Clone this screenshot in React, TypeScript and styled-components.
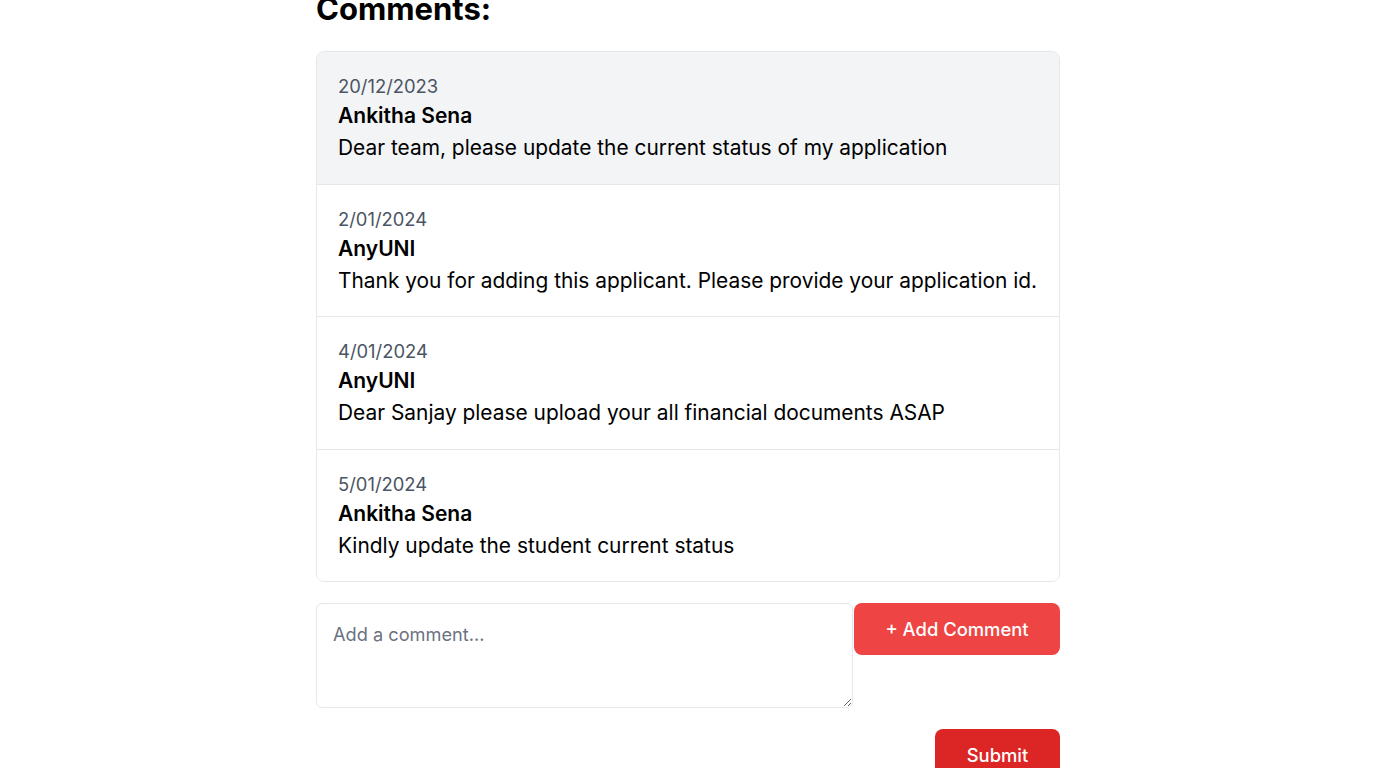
import React, { useState, ChangeEvent } from 'react';
import styled, { createGlobalStyle } from 'styled-components';

type Comment = {
  date: string;
  author: string;
  text: string;
};

const comments: Comment[] = [
  { date: '20/12/2023', author: 'Ankitha Sena', text: 'Dear team, please update the current status of my application' },
  { date: '2/01/2024', author: 'AnyUNI', text: 'Thank you for adding this applicant. Please provide your application id.' },
  { date: '4/01/2024', author: 'AnyUNI', text: 'Dear Sanjay please upload your all financial documents ASAP' },
  { date: '5/01/2024', author: 'Ankitha Sena', text: 'Kindly update the student current status' },
];

const CommentsSection = () => {
  const [draft, setDraft] = useState('');

  const draftHandler = (event: ChangeEvent<HTMLTextAreaElement>) => {
    setDraft(event.currentTarget.value);
  };

  return (
    <StyledPage>
      <GlobalStyle />
      <StyledContainer>
        <Heading>Comments:</Heading>

        <CommentList>
          {comments.map((c, i) => (
            <CommentItem key={i} $active={i === 0}>
              <CommentDate>{c.date}</CommentDate>
              <CommentAuthor>{c.author}</CommentAuthor>
              <CommentText>{c.text}</CommentText>
            </CommentItem>
          ))}
        </CommentList>

        <InputRow>
          <CommentInput placeholder="Add a comment..." value={draft} onChange={(e) => draftHandler(e)} />
          <AddButton>+ Add Comment</AddButton>
        </InputRow>

        <SubmitRow>
          <SubmitButton>Submit</SubmitButton>
        </SubmitRow>
      </StyledContainer>
    </StyledPage>
  );
};

export default CommentsSection;

const GlobalStyle = createGlobalStyle`
  html, body {
    margin: 0;
    padding: 0;
    background: #ffffff;
    overflow: hidden;
  }

  body {
    font-family: Inter, "Noto Sans", sans-serif;
    color: #111111;
  }

  * {
    box-sizing: border-box;
  }
`;

const StyledPage = styled.div`
  height: 768px;
  overflow: hidden;
`;

const StyledContainer = styled.div`
  width: 768px;
  margin: -9px auto 0;
  padding: 0 12px;
`;

const Heading = styled.h2`
  margin: 0 0 24px;
  font-size: 31px;
  line-height: 36px;
  font-weight: 700;
  color: #000000;
`;

const CommentList = styled.div`
  border: 1px solid #e5e7eb;
  border-radius: 8px;
  overflow: hidden;
`;

const CommentItem = styled.div<{ $active?: boolean }>`
  padding: 20px 14px 19.5px 21px;
  background-color: ${(p) => (p.$active ? '#f3f4f6' : '#ffffff')};
  border-top: 1px solid #e5e7eb;

  &:first-child {
    border-top: none;
  }
`;

const CommentDate = styled.div`
  font-size: 18.4px;
  line-height: 28px;
  color: #4b5563;
`;

const CommentAuthor = styled.div`
  font-size: 21px;
  line-height: 32px;
  font-weight: 600;
  color: #000000;
`;

const CommentText = styled.div`
  font-size: 20.9px;
  line-height: 32px;
  color: #000000;
`;

const InputRow = styled.div`
  display: flex;
  align-items: flex-start;
  margin-top: 21px;
`;

const CommentInput = styled.textarea`
  flex: 1;
  height: 105px;
  padding: 16px;
  font-family: Inter, "Noto Sans", sans-serif;
  font-size: 18.2px;
  line-height: 28px;
  color: #111111;
  border: 1px solid #e5e7eb;
  border-radius: 6px;
  outline: none;

  &::placeholder {
    color: #6b7280;
  }
`;

const AddButton = styled.button`
  width: 206px;
  height: 52px;
  margin-left: 1px;
  border: none;
  border-radius: 8px;
  background-color: #ef4444;
  color: #ffffff;
  font-family: Inter, "Noto Sans", sans-serif;
  font-size: 18.4px;
  font-weight: 500;
  cursor: pointer;
`;

const SubmitRow = styled.div`
  display: flex;
  justify-content: flex-end;
  margin-top: 21px;
`;

const SubmitButton = styled.button`
  width: 125px;
  height: 52px;
  border: none;
  border-radius: 8px;
  background-color: #dc2626;
  color: #ffffff;
  font-family: Inter, "Noto Sans", sans-serif;
  font-size: 18.4px;
  font-weight: 500;
  cursor: pointer;
`;
